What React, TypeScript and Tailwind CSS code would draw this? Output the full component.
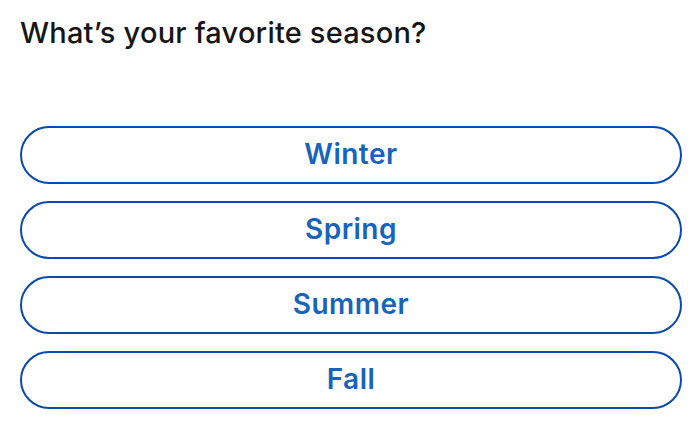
const seasons = ["Winter", "Spring", "Summer", "Fall"];

export default function App() {
  return (
    <div className="h-[429px] w-[700px] bg-white px-5 pt-[13px] font-['Inter','Noto_Sans',sans-serif]">
      <h1 className="text-[29px] leading-[40px] font-medium tracking-[0.2px] text-[#161616]">
        What’s your favorite season?
      </h1>
      <div className="mt-[73px] flex w-[662px] flex-col gap-[17px]">
        {seasons.map((season) => (
          <button
            key={season}
            type="button"
            className="flex h-[58px] items-center justify-center rounded-full border-2 border-[#0c4ba9] bg-white pb-[2px] text-[28px] font-semibold tracking-[0.5px] text-[#1763bd]"
          >
            {season}
          </button>
        ))}
      </div>
    </div>
  );
}
